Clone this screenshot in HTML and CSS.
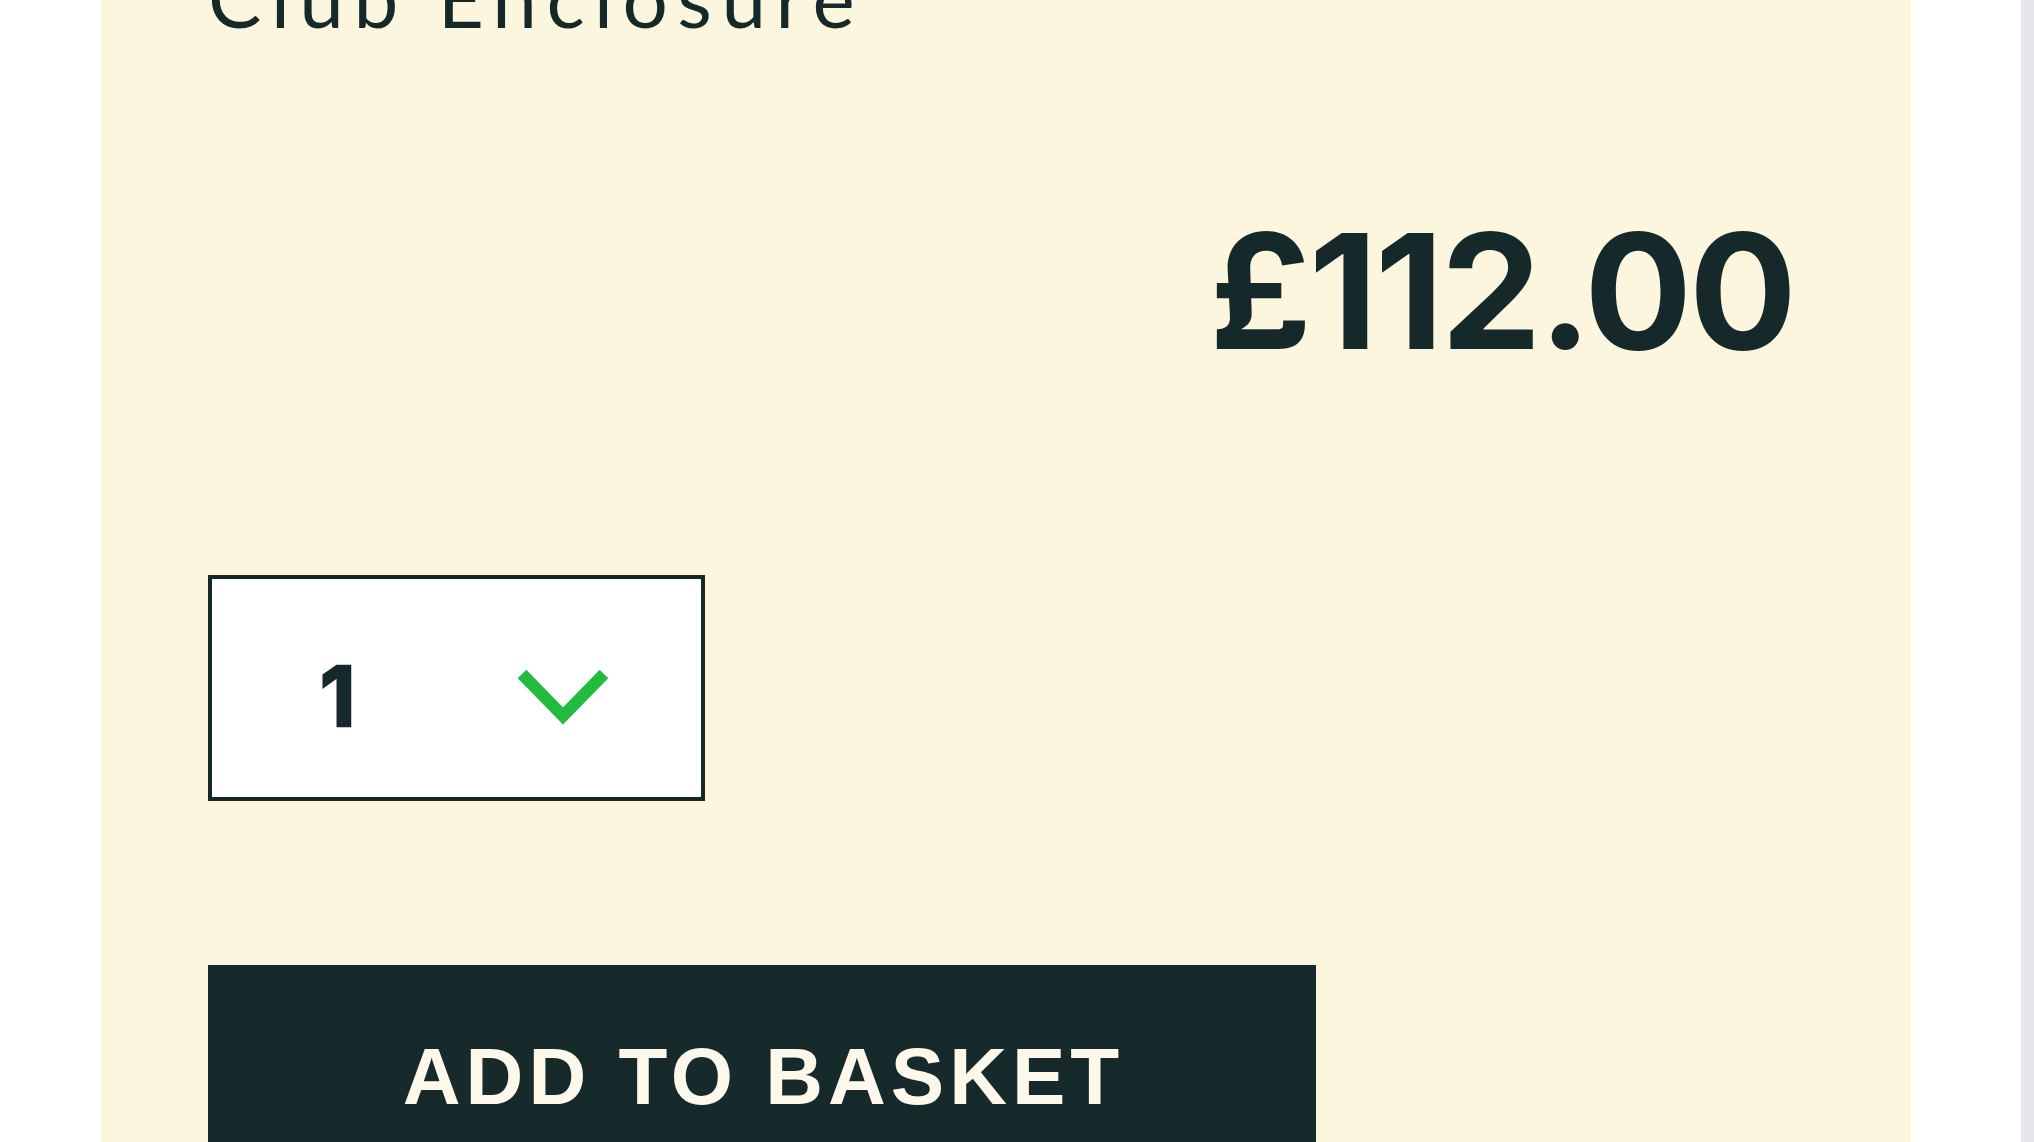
FILE: index.html
```html
<!DOCTYPE html>
<html lang="en">
<head>
<meta charset="utf-8">
<title>Club Enclosure</title>
<link rel="stylesheet" href="styles.css">
</head>
<body>
<div class="page">
  <div class="gutter"></div>
  <main class="panel">
    <h1 class="title">Club Enclosure</h1>
    <div class="price-row">
      <span class="price">£112.00</span>
    </div>
    <div class="qty">
      <span class="qty-value">1</span>
      <svg class="chev" width="92" height="56" viewBox="0 0 92 56" aria-hidden="true">
        <polyline points="5,5 46,47 87,5" fill="none" stroke="#22bb40" stroke-width="12"/>
      </svg>
    </div>
    <button class="add" type="button">ADD TO BASKET</button>
  </main>
  <div class="side"></div>
  <div class="scroll"></div>
</div>
</body>
</html>
```

FILE: styles.css
```css
html, body {
  margin: 0;
  padding: 0;
  background: #ffffff;
  overflow: hidden;
}
.page {
  display: flex;
  height: 1142px;
  width: 2034px;
}
.gutter {
  width: 101px;
  flex: none;
}
.panel {
  width: 1810px;
  flex: none;
  background: #fdf6df;
  box-sizing: border-box;
  padding: 0 117px 0 107px;
  display: flex;
  flex-direction: column;
  align-items: flex-start;
  color: #16292a;
  overflow: hidden;
}
.panel > * {
  flex: none;
}
.side {
  flex: 1;
}
.scroll {
  width: 13px;
  flex: none;
  background: #e6e7ec;
}
.title {
  margin: -43px 0 0 0;
  font-family: Lato, "Noto Sans", sans-serif;
  font-weight: 400;
  font-size: 80px;
  line-height: 80px;
  letter-spacing: 9.5px;
  color: #16292a;
}
.price-row {
  align-self: stretch;
  display: flex;
  justify-content: flex-end;
  margin-top: 174px;
}
.price {
  font-family: Inter, "Noto Sans", sans-serif;
  font-weight: 700;
  font-size: 160px;
  line-height: 160px;
  letter-spacing: -3px;
  color: #16292a;
}
.qty {
  margin-top: 204px;
  width: 497px;
  height: 226px;
  box-sizing: border-box;
  border: 4px solid #16292a;
  background: #ffffff;
  display: flex;
  align-items: center;
  padding: 18px 0 0 108px;
}
.qty-value {
  width: 197px;
  font-family: Inter, "Liberation Sans", sans-serif;
  font-weight: 700;
  font-size: 82px;
  line-height: 1;
  color: #16292a;
  -webkit-text-stroke: 2.5px #16292a;
}
.chev {
  display: block;
}
.add {
  margin-top: 164px;
  width: 1108px;
  height: 250px;
  border: 0;
  background: #172a2b;
  color: #fdf8ea;
  font-family: "Liberation Sans", Arial, sans-serif;
  font-weight: 700;
  font-size: 80px;
  line-height: 80px;
  letter-spacing: 5px;
  padding: 72px 0 0 3px;
  display: flex;
  align-items: flex-start;
  justify-content: center;
  cursor: pointer;
}
```
